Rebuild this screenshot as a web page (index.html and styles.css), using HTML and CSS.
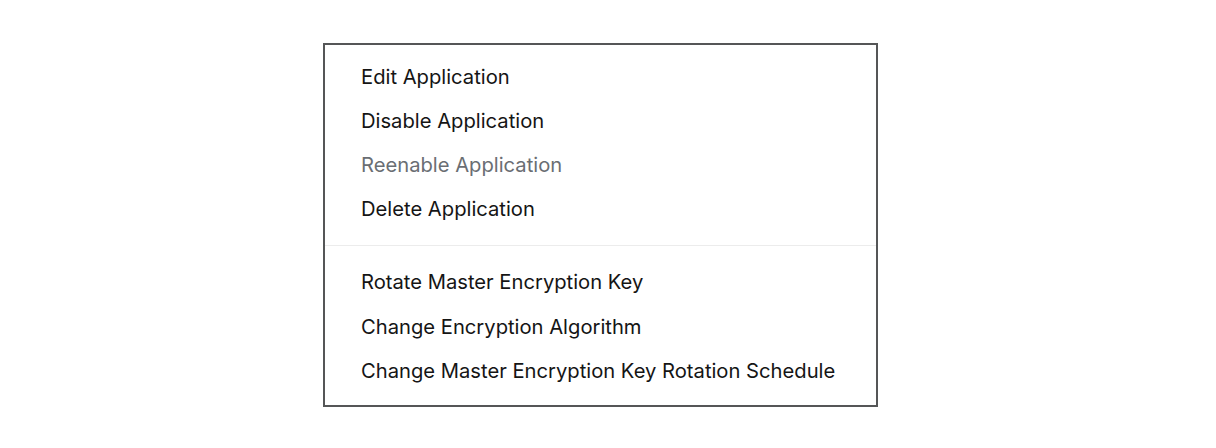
FILE: index.html
```html
<!DOCTYPE html>
<html>
<head>
<meta charset="utf-8">
<link rel="stylesheet" href="styles.css">
</head>
<body>
<div class="menu" role="menu">
  <ul class="group">
    <li class="item">Edit Application</li>
    <li class="item">Disable Application</li>
    <li class="item disabled">Reenable Application</li>
    <li class="item">Delete Application</li>
  </ul>
  <hr class="divider">
  <ul class="group">
    <li class="item">Rotate Master Encryption Key</li>
    <li class="item">Change Encryption Algorithm</li>
    <li class="item">Change Master Encryption Key Rotation Schedule</li>
  </ul>
</div>
</body>
</html>
```
FILE: styles.css
```css
html, body {
  margin: 0;
  padding: 0;
  background: #ffffff;
}
body {
  padding-top: 43px;
  font-family: Inter, "Open Sans", sans-serif;
}
.menu {
  box-sizing: border-box;
  width: 555px;
  margin-left: 323px;
  border: 2px solid #555657;
  background: #fff;
  padding: 10px 0 11px;
}
.group {
  list-style: none;
  margin: 0;
  padding: 0;
}
.item {
  height: 44px;
  line-height: 44px;
  padding: 0 36px;
  font-size: 20.2px;
  color: #151515;
  white-space: nowrap;
}
.group + .divider + .group .item {
  height: 44.5px;
}
.item.disabled {
  color: #6a6e73;
}
.divider {
  margin: 14px 0 14px;
  border: 0;
  height: 1px;
  background: #ececec;
}
```
